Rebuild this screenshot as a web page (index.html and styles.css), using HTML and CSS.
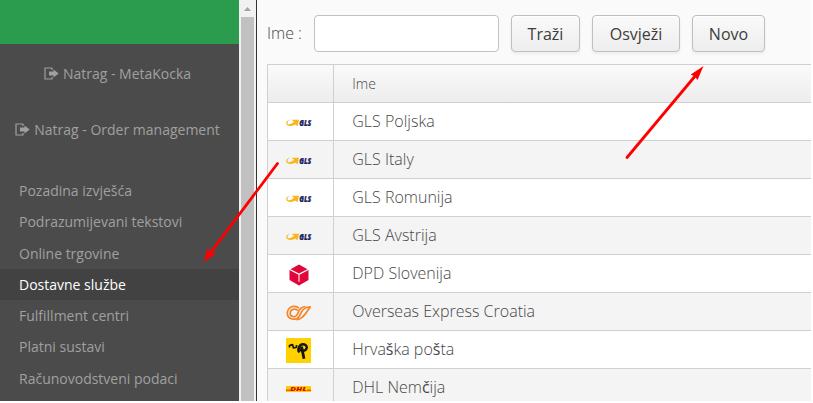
FILE: index.html
```html
<!DOCTYPE html>
<html lang="hr">
<head>
<meta charset="utf-8">
<title>Dostavne službe</title>
<link rel="stylesheet" href="styles.css">
</head>
<body>
<svg class="defs" width="0" height="0">
  <symbol id="exit" viewBox="0 0 15 13">
    <path d="M8.500 1H1v11h7.500M8 1v2M8 12v-2" fill="none" stroke="#a0a0a0" stroke-width="1.200"/>
    <path d="M5 4.500h4.500V2.500L14.700 6.500 9.500 10.500V8.500H5z" fill="#a0a0a0"/>
  </symbol>
  <symbol id="gls" viewBox="0 0 26 8">
    <path d="M4.500.3C1 1.300-.6 3.600.5 5.300 2 7.500 6 7.500 9 5.500L11.500 7.300 13 .8H5.500L7.900 2.500C6.500 4.700 3.500 6 1.800 4.900.9 3.600 2 1.700 4.500.3z" fill="#f9b51c"/>
    <text x="13.300" y="6.800" textLength="12" lengthAdjust="spacingAndGlyphs" class="gls-text">GLS</text>
  </symbol>
</svg>
<div class="app">
  <aside class="sidebar">
    <div class="brand"></div>
    <a class="back"><svg width="15" height="13"><use href="#exit"/></svg><span>Natrag - MetaKocka</span></a>
    <a class="back"><svg width="15" height="13"><use href="#exit"/></svg><span>Natrag - Order management</span></a>
    <nav class="menu">
      <a><span>Pozadina izvješća</span></a>
      <a><span>Podrazumijevani tekstovi</span></a>
      <a><span>Online trgovine</span></a>
      <a class="active"><span>Dostavne službe</span></a>
      <a><span>Fulfillment centri</span></a>
      <a><span>Platni sustavi</span></a>
      <a><span>Računovodstveni podaci</span></a>
    </nav>
  </aside>
  <div class="scrollbar"><svg width="17" height="17"><path d="M5 11h7L8.500 7z" fill="#a3a3a3"/></svg><div class="thumb"></div></div>
  <main class="content">
    <div class="toolbar">
      <label>Ime :</label>
      <input type="text">
      <button class="b1">Traži</button>
      <button class="b2">Osvježi</button>
      <button class="b3">Novo</button>
    </div>
    <div class="grid">
      <div class="row head"><div class="icon"></div><div class="name">Ime</div></div>
      <div class="row"><div class="icon"><svg width="26" height="8"><use href="#gls"/></svg></div><div class="name">GLS Poljska</div></div>
      <div class="row alt"><div class="icon"><svg width="26" height="8"><use href="#gls"/></svg></div><div class="name">GLS Italy</div></div>
      <div class="row"><div class="icon"><svg width="26" height="8"><use href="#gls"/></svg></div><div class="name">GLS Romunija</div></div>
      <div class="row alt"><div class="icon"><svg width="26" height="8"><use href="#gls"/></svg></div><div class="name">GLS Avstrija</div></div>
      <div class="row"><div class="icon"><svg width="20" height="22" viewBox="0 0 20 22"><path d="M10 .5L18.500 5.300 10 9.500 1.500 5.300z" fill="#e0063a"/><path d="M.5 6L9.500 10.800V17.500L10.500 18V10.800L19.500 6V16L10 21.500.5 16z" fill="#e0063a"/></svg></div><div class="name">DPD Slovenija</div></div>
      <div class="row alt"><div class="icon"><svg width="26" height="16" viewBox="0 0 26 16"><g fill="none" stroke="#f58426"><path d="M13 3.200C11.500 1.700 9.500 1.200 7.500 1.400 4 1.700 1.300 4.500 1.300 8c0 6.500 9 8.500 12.200 2.800C15.500 7 17 1.800 24.500 1.800" stroke-width="1.700"/><path d="M11.800 5.500C9 3 4.200 4.200 4.200 8.200c0 4 5.300 4.800 7 1.300C13 6 14 1.800 19.500 1.500M24.500 1.500C22 5 20 9 16.500 12c-1.500 1.500-3 2.500-6 2.600" stroke-width="1.700"/></g></svg></div><div class="name">Overseas Express Croatia</div></div>
      <div class="row"><div class="icon"><svg width="25" height="25" viewBox="0 0 25 25"><path d="M0 0h25v25H0z" fill="#ffd100"/><g fill="none" stroke="#17150f" stroke-linejoin="round"><path d="M3.500 9.500V7.500L6.500 6.500 7.500 10l3-.8V7" stroke-width="1.700"/><ellipse cx="17" cy="9.500" rx="3.800" ry="3.200" stroke-width="2.400"/><path d="M14 8c-2 2-2.500 4.500-.5 6.500" stroke-width="2.200"/><path d="M15.500 8.500L18 20.800" stroke-width="2.800"/></g></svg></div><div class="name">Hrva<b>š</b>ka po<b>š</b>ta</div></div>
      <div class="row alt"><div class="icon"><svg width="25" height="6" viewBox="0 0 25 6"><path d="M0 0h25v6H0z" fill="#fc0"/><path d="M0 4.200h4M21 4.200h4" stroke="#d40511" stroke-width=".8"/><text x="4" y="4.600" textLength="17" lengthAdjust="spacingAndGlyphs" class="dhl-text">DHL</text></svg></div><div class="name">DHL Nem<b>č</b>ija</div></div>
    </div>
  </main>
  <svg class="arrows" width="811" height="401">
    <g stroke="#f00" stroke-width="2.800" stroke-linecap="round"><path d="M627 157.500L696 75M277.500 163.500L211 252"/></g>
    <path d="M703.500 66L697.500 80 694.800 76.500 690.800 74.500zM204 262L207.500 248 211 252 216 253.500z" fill="#f00"/>
  </svg>
</div>
</body>
</html>
```

FILE: styles.css
```css
* { box-sizing: border-box; }
body { margin: 0; background: #fff; font-family: "Open Sans", sans-serif; overflow: hidden; }
.defs { display: none; }
.app { position: relative; display: flex; width: 811px; height: 401px; overflow: hidden; }
.sidebar { width: 239px; background: #4b4b4b; color: #a0a0a0; font-size: 14px; }
.brand { height: 44px; background: #2b9b4e; }
.back { display: flex; align-items: center; justify-content: center; height: 56px; padding: 3px 4px 0 0; gap: 4px; white-space: nowrap; }
.back span { line-height: 20px; }
.menu { padding-top: 19px; }
.menu a { display: flex; align-items: center; height: 31.250px; padding-left: 19px; white-space: nowrap; }
.menu .active { background: #424242; color: #fff; }
.scrollbar { width: 17px; background: #f1f1f1; display: flex; flex-direction: column; flex: none; }
.scrollbar svg { display: block; }
.thumb { flex: 1; margin: 0 2px; background: #c1c1c1; }
.content { flex: 1; min-width: 0; border-left: 1px solid #323232; background: #fafafa; padding: 15px 0 0 10px; }
.toolbar { display: flex; height: 37px; align-items: center; margin-bottom: 12px; color: #474747; font-size: 16px; font-weight: 300; }
.toolbar label { width: 47px; padding-bottom: 2px; }
.toolbar input { width: 185px; height: 37px; border: 1px solid #c1c1c1; border-radius: 4px; background: #fff; margin: 0 12px 0 0; padding: 0 9px; }
.toolbar button { height: 37px; padding: 0; margin-right: 12px; border: 1px solid #bfbfbf; border-radius: 4px; background: linear-gradient(#fafafa, #ededed); box-shadow: 0 2px 3px rgba(0,0,0,.06), inset 0 1px #fff; color: #3c3c3c; font: 400 16px "Open Sans", sans-serif; }
.b1 { width: 69px; }
.b2 { width: 88px; }
.b3 { width: 73px; }
.grid { border: solid #d0d0d0; border-width: 1px 0 0 1px; }
.row { display: flex; height: 38px; border-bottom: 1px solid #d0d0d0; background: #fff; }
.row.alt { background: #f4f4f4; }
.row.head { background: linear-gradient(#fafafa, #ededed); }
.icon { width: 66px; border-right: 1px solid #d0d0d0; display: flex; align-items: center; justify-content: center; padding: 2px 4px 0 0; }
.name { flex: 1; padding-left: 18.300px; font-size: 16px; font-weight: 300; line-height: 37px; color: #474747; white-space: nowrap; }
.name b { font-weight: 400; }
.head .name { font-size: 14px; }
.gls-text { font: italic 800 8px "Open Sans", sans-serif; fill: #1a1c5e; stroke: #1a1c5e; stroke-width: .2; }
.dhl-text { font: italic 800 4.500px "Open Sans", sans-serif; fill: #d40511; }
.arrows { position: absolute; left: 0; top: 0; }
```
